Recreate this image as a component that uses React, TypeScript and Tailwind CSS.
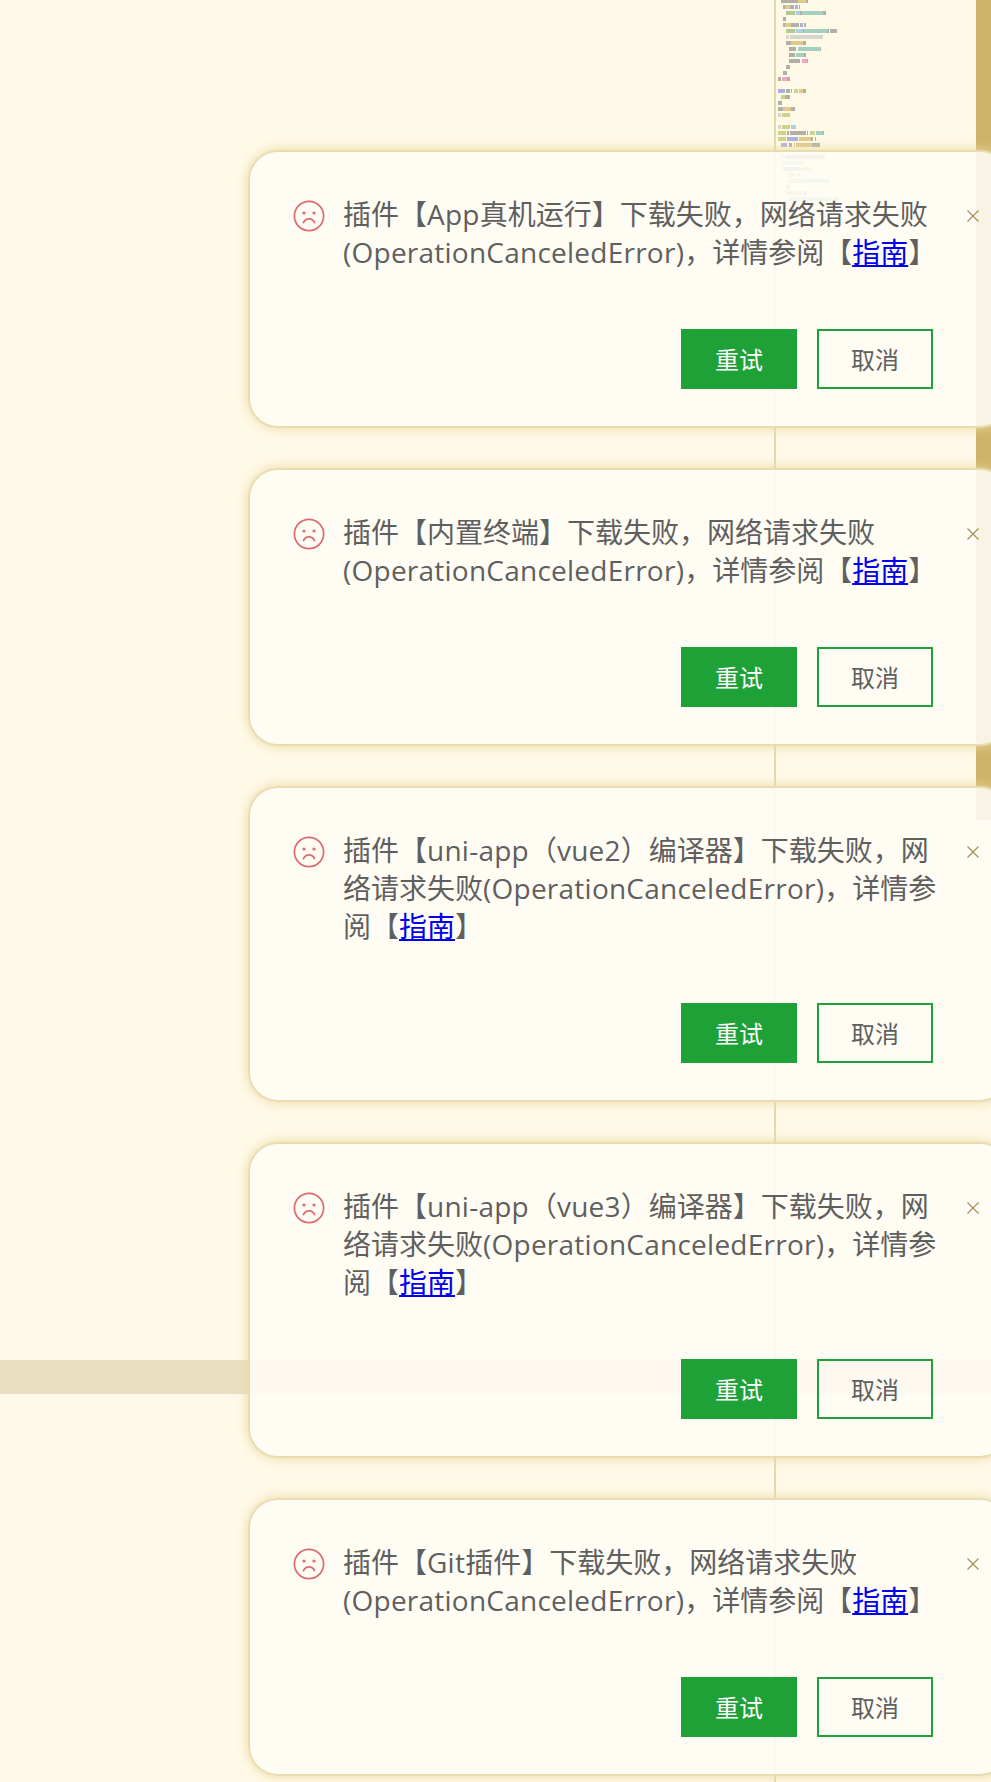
const G = "#b0b0a8";
const T = "#e2c98c";
const P = "#adb0dc";
const L = "#d6d6ca";
const GR = "#b4c98e";
const B = "#a9d2e2";
const TE = "#a3d0c0";
const PK = "#efa8c4";
const O = "#ccd48c";

// [zoomed y, start, end, colour], taken from the minimap rows
const minimap: [number, [number, number, string][]][] = [
  [3, [[63, 114, G], [114, 138, T], [138, 144, G]]],
  [21, [[69, 75, G], [75, 90, T], [90, 102, G], [105, 114, P], [117, 120, G]]],
  [39, [[78, 105, GR], [107, 120, B], [120, 126, G], [126, 189, TE], [189, 198, G]]],
  [57, [[69, 78, G]]],
  [75, [[69, 75, G], [75, 93, T], [93, 117, G], [120, 129, P], [132, 138, G]]],
  [93, [[78, 105, GR], [107, 129, B], [129, 132, G], [132, 201, TE], [201, 207, G], [210, 231, G]]],
  [111, [[78, 87, L], [90, 189, L]]],
  [129, [[78, 93, G], [93, 129, T], [129, 138, G]]],
  [147, [[87, 108, G], [114, 180, TE], [180, 183, G]]],
  [165, [[87, 105, G], [108, 132, TE], [132, 138, G]]],
  [183, [[87, 120, G], [126, 141, PK], [141, 144, G]]],
  [201, [[78, 90, G]]],
  [219, [[69, 81, G]]],
  [237, [[54, 63, G], [66, 81, PK], [81, 90, G]]],
  [273, [[54, 75, P], [78, 90, G], [93, 96, G], [102, 114, O], [117, 129, T], [129, 138, G]]],
  [291, [[63, 75, O], [75, 90, G]]],
  [309, [[54, 66, G]]],
  [327, [[54, 69, G], [69, 93, T], [93, 105, G]]],
  [345, [[54, 63, L], [66, 90, O]]],
  [381, [[54, 63, L], [66, 90, O], [93, 108, B]]],
  [399, [[54, 78, O], [81, 87, G], [90, 138, G], [141, 144, G], [150, 165, O], [168, 189, TE], [189, 192, G]]],
  [417, [[54, 78, O], [81, 114, P], [117, 153, T], [153, 159, G], [165, 168, G]]],
  [435, [[63, 81, P], [87, 96, G], [102, 105, T], [108, 156, T], [156, 180, G]]],
  [471, [[63, 72, L], [75, 195, G]]],
  [489, [[63, 114, B], [117, 126, G], [129, 132, G]]],
  [507, [[69, 120, G], [120, 153, T]]],
  [525, [[78, 108, T], [114, 120, G], [126, 129, G]]],
  [543, [[87, 120, GR], [120, 207, TE]]],
  [561, [[78, 90, G]]],
  [579, [[78, 126, T], [129, 141, G]]],
  [597, [[87, 213, TE], [219, 237, G]]],
];

const notices = [
  { lines: ["插件【App真机运行】下载失败，网络请求失败"] },
  { lines: ["插件【内置终端】下载失败，网络请求失败"] },
  { lines: ["插件【uni-app（vue2）编译器】下载失败，网", "络请求失败(OperationCanceledError)，详情参"], short: true },
  { lines: ["插件【uni-app（vue3）编译器】下载失败，网", "络请求失败(OperationCanceledError)，详情参"], short: true },
  { lines: ["插件【Git插件】下载失败，网络请求失败"] },
];

// latin runs are a touch wider in the reference
function Latin({ text }: { text: string }) {
  return (
    <>
      {text.split(/([A-Za-z0-9()-]+)/).map((part, i) =>
        i % 2 ? (
          <span key={i} className="tracking-[0.24px]">
            {part}
          </span>
        ) : (
          part
        )
      )}
    </>
  );
}

function SadIcon() {
  return (
    <svg width="32" height="32" viewBox="0 0 32 32" fill="none" stroke="#dc6a6e" strokeWidth="1.7" strokeLinecap="round">
      <circle cx="16" cy="16" r="14.6" />
      <circle cx="11" cy="13" r="1.6" fill="#dc6a6e" stroke="none" />
      <circle cx="21" cy="13" r="1.6" fill="#dc6a6e" stroke="none" />
      <path d="M10.5 22.5c1.2-2.4 3.1-3.6 5.5-3.6s4.3 1.2 5.5 3.6" />
    </svg>
  );
}

function Notice({ lines, short }: { lines: string[]; short?: boolean }) {
  return (
    <div className="relative z-10 w-[762px] rounded-[30px] border-2 border-[#e8dcb0] bg-[#fffcf6]/[0.88] pt-[43px] pb-[37px] shadow-[0_0_12px_#e8d8a0]">
      <div className="flex items-start">
        <div className="ml-[43px] mt-[5px] w-[50px] shrink-0">
          <SadIcon />
        </div>
        <div className="w-[610px] shrink-0 whitespace-nowrap text-[28px] leading-[38px] text-[#5f5f5f]">
          {lines.map((l) => (
            <div key={l}>
              <Latin text={l} />
            </div>
          ))}
          {short ? (
            <div>
              阅【<a href="#" className="text-[#0000ee] underline">指南</a>】
            </div>
          ) : (
            <div>
              <Latin text="(OperationCanceledError)，详情参阅【" />
              <a href="#" className="text-[#0000ee] underline">指南</a>】
            </div>
          )}
        </div>
        <svg className="mt-[15px] ml-[14px] shrink-0" width="12" height="12" viewBox="0 0 12 12" stroke="#a8925a" strokeWidth="1.3">
          <path d="M0.5 0.5l11 11M11.5 0.5l-11 11" />
        </svg>
      </div>
      <div className="mt-[58px] ml-[431px] flex gap-5">
        <button className="h-[60px] w-[116px] bg-[#1ea137] pt-[2px] text-[24px] text-white">重试</button>
        <button className="h-[60px] w-[116px] border-2 border-[#1ea137] pt-[2px] text-[24px] text-[#5f5f5f]">取消</button>
      </div>
    </div>
  );
}

export default function App() {
  return (
    <div
      className="relative h-[1782px] w-full overflow-hidden bg-[#fff9e7] pt-[150px] pl-[248px]"
      style={{ fontFamily: '"Open Sans", "Noto Sans CJK SC", sans-serif' }}
    >
      {/* editor underneath the notifications */}
      <div className="absolute top-0 left-[774px] h-full w-[2px] bg-[#e5d8ae]" />
      <div className="absolute top-0 left-[976px] h-[820px] w-[15px] bg-[#cdb368]" />
      <div className="absolute top-[1360px] left-0 h-[34px] w-full bg-[#e9dfc3]" />
      <svg className="absolute top-0 left-[760px]" width="90" height="204">
        {minimap.map(([y, segs]) =>
          segs.map(([a, b, c]) => (
            <rect key={`${y}-${a}`} x={a / 3} y={y / 3 - 2} width={(b - a) / 3} height="4" fill={c} />
          ))
        )}
      </svg>

      <div className="flex flex-col gap-[40px]">
        {notices.map((n, i) => (
          <Notice key={i} lines={n.lines} short={n.short} />
        ))}
      </div>
    </div>
  );
}
